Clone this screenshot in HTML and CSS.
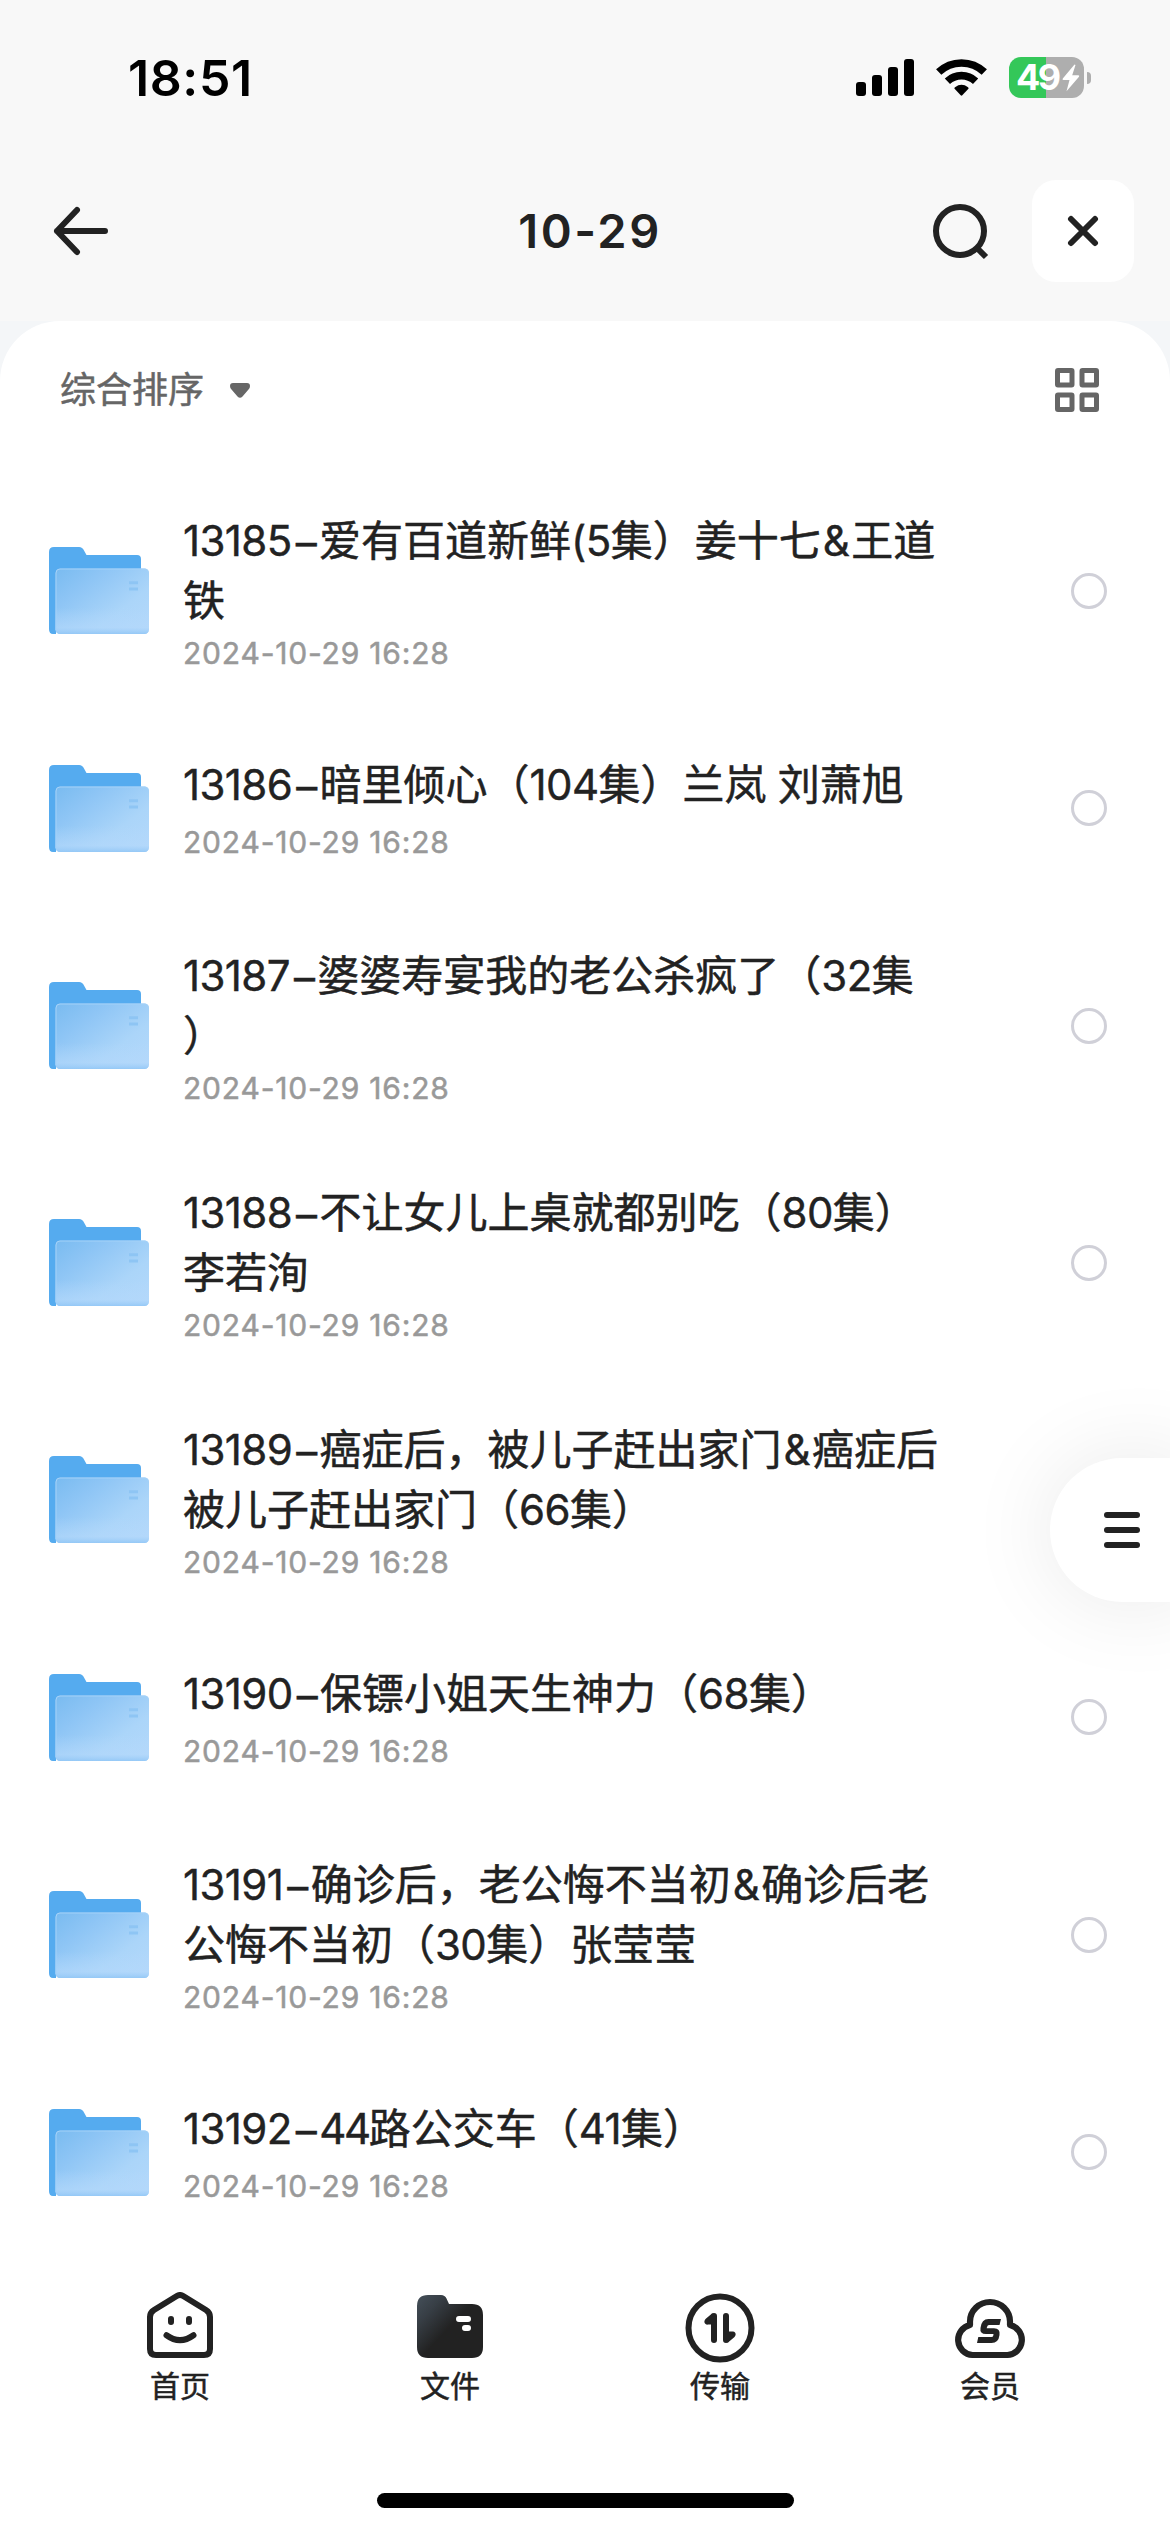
FILE: index.html
```html
<!DOCTYPE html>
<html lang="zh-CN">
<head>
<meta charset="utf-8">
<title>10-29</title>
<link rel="stylesheet" href="styles.css">
</head>
<body>
<svg class="defs" width="0" height="0" aria-hidden="true">
  <defs>
    <linearGradient id="front" x1="0" y1="0" x2="1" y2="0.9">
      <stop offset="0" stop-color="#79bbf0"/>
      <stop offset="0.3" stop-color="#8ec5f5"/>
      <stop offset="0.7" stop-color="#abd5f9"/>
      <stop offset="1" stop-color="#b3d8fb"/>
    </linearGradient>
    <linearGradient id="frontEdge" x1="0" y1="0" x2="0" y2="1">
      <stop offset="0.6" stop-color="#b3d8fb" stop-opacity="0"/>
      <stop offset="0.9" stop-color="#b3d8fb" stop-opacity="0.6"/>
      <stop offset="1" stop-color="#92c7f6" stop-opacity="0.9"/>
    </linearGradient>
    <linearGradient id="dark" x1="0.05" y1="0.1" x2="0.5" y2="0.5">
      <stop offset="0" stop-color="#404a53"/>
      <stop offset="0.35" stop-color="#373e45"/>
      <stop offset="1" stop-color="#222"/>
    </linearGradient>
    <symbol id="folder" viewBox="0 0 100 87">
      <path d="M0 5Q0 0 5 0H30Q33.500 0 35 3.500L37.500 8H88Q92 8 92 12V60H7V87H4Q0 87 0 82Z" fill="#55abef"/>
      <rect x="6.500" y="21.500" width="93.500" height="65.500" rx="4.500" fill="url(#front)"/>
      <rect x="6.500" y="21.500" width="93.500" height="65.500" rx="4.500" fill="url(#frontEdge)"/>
      <path d="M7 83V26Q7 22 11 22H96Q99.500 22 99.500 26" fill="none" stroke="#a4d1f8" stroke-width="1"/>
      <path d="M80 35.700H89M80 42H89" stroke="#8ec5f4" stroke-width="3"/>
    </symbol>
  </defs>
</svg>

<div class="screen">
  <div class="statusbar">
    <span class="clock">18:51</span>
    <div class="indicators">
      <svg width="58" height="37" viewBox="0 0 58 37"><rect x="0" y="23" width="10" height="14" rx="3"/><rect x="16" y="16" width="10" height="21" rx="3"/><rect x="32" y="8" width="10" height="29" rx="3"/><rect x="48" y="0" width="10" height="37" rx="3"/></svg>
      <svg class="wifi" width="51" height="37" viewBox="0 0 51 37"><path d="M2.700 13.100A33 33 0 0 1 48.300 13.100M11.400 22.200A20.500 20.500 0 0 1 39.600 22.200" fill="none" stroke="#000" stroke-width="7.600"/><path d="M18.600 29.800Q18 29 19 28.200Q25.500 23.500 32 28.200Q33 29 32.400 29.800L26.300 36.300Q25.500 37 24.700 36.300Z"/></svg>
      <div class="battery">
        <div class="cell"><span>49</span><svg width="18" height="28" viewBox="0 0 18 28"><path d="M12.500 0.500L0.800 14.500Q0 16 1.500 16H7.500L4.500 27.200L17 12.800Q17.800 11.500 16.300 11.300H10.200L13.500 1Z" fill="#fff"/></svg></div>
        <i class="nub"></i>
      </div>
    </div>
  </div>

  <header class="navbar">
    <svg class="back" width="56" height="50" viewBox="0 0 56 50"><path d="M25 4L5 25L25 46M5 25H53" fill="none" stroke="#222" stroke-width="6" stroke-linecap="round" stroke-linejoin="round"/></svg>
    <h1>10-29</h1>
    <div class="actions">
      <svg width="58" height="58" viewBox="0 0 58 58"><circle cx="29" cy="29" r="24" fill="none" stroke="#222" stroke-width="6"/><path d="M46 46L55 55" stroke="#222" stroke-width="6"/></svg>
      <div class="close"><svg width="32" height="32" viewBox="0 0 32 32"><path d="M4 4L28 28M28 4L4 28" stroke="#222" stroke-width="6" stroke-linecap="round"/></svg></div>
    </div>
  </header>

  <main class="sheet">
    <div class="toolbar">
      <div class="sort"><span>综合排序</span><svg width="20" height="15" viewBox="0 0 20 15"><path d="M3 0H17Q20 0 20 3Q20 5 18.500 6.500L12.500 13.500Q10 16 7.500 13.500L1.500 6.500Q0 5 0 3Q0 0 3 0Z" fill="#666"/></svg></div>
      <svg width="44" height="44" viewBox="0 0 44 44"><g fill="none" stroke="#666" stroke-width="5"><rect x="2.500" y="2.500" width="14.500" height="14.500" rx="0.500"/><rect x="27" y="2.500" width="14.500" height="14.500" rx="0.500"/><rect x="2.500" y="27" width="14.500" height="14.500" rx="0.500"/><rect x="27" y="27" width="14.500" height="14.500" rx="0.500"/></g></svg>
    </div>

    <div class="list">
      <div class="row">
        <svg class="folder"><use href="#folder"/></svg>
        <div class="info"><div class="name"><b>13185</b><b class="dash">–</b>爱有百道新鲜<b>(5</b>集）姜十七<b class="amp">&amp;</b>王道<br>铁</div><div class="date">2024-10-29 16:28</div></div>
        <i class="radio"></i>
      </div>
      <div class="row single">
        <svg class="folder"><use href="#folder"/></svg>
        <div class="info"><div class="name"><b>13186</b><b class="dash">–</b>暗里倾心（<b>104</b>集）兰岚<b> </b>刘萧旭</div><div class="date">2024-10-29 16:28</div></div>
        <i class="radio"></i>
      </div>
      <div class="row">
        <svg class="folder"><use href="#folder"/></svg>
        <div class="info"><div class="name"><b>13187</b><b class="dash">–</b>婆婆寿宴我的老公杀疯了（<b>32</b>集<br>）</div><div class="date">2024-10-29 16:28</div></div>
        <i class="radio"></i>
      </div>
      <div class="row">
        <svg class="folder"><use href="#folder"/></svg>
        <div class="info"><div class="name"><b>13188</b><b class="dash">–</b>不让女儿上桌就都别吃（<b>80</b>集）<br>李若洵</div><div class="date">2024-10-29 16:28</div></div>
        <i class="radio"></i>
      </div>
      <div class="row">
        <svg class="folder"><use href="#folder"/></svg>
        <div class="info"><div class="name"><b>13189</b><b class="dash">–</b>癌症后，被儿子赶出家门<b class="amp">&amp;</b>癌症后<br>被儿子赶出家门（<b>66</b>集）</div><div class="date">2024-10-29 16:28</div></div>
        <i class="radio"></i>
      </div>
      <div class="row single">
        <svg class="folder"><use href="#folder"/></svg>
        <div class="info"><div class="name"><b>13190</b><b class="dash">–</b>保镖小姐天生神力（<b>68</b>集）</div><div class="date">2024-10-29 16:28</div></div>
        <i class="radio"></i>
      </div>
      <div class="row">
        <svg class="folder"><use href="#folder"/></svg>
        <div class="info"><div class="name"><b>13191</b><b class="dash">–</b>确诊后，老公悔不当初<b class="amp">&amp;</b>确诊后老<br>公悔不当初（<b>30</b>集）张莹莹</div><div class="date">2024-10-29 16:28</div></div>
        <i class="radio"></i>
      </div>
      <div class="row single">
        <svg class="folder"><use href="#folder"/></svg>
        <div class="info"><div class="name"><b>13192</b><b class="dash">–</b><b class="tight">44</b>路公交车（<b>41</b>集）</div><div class="date">2024-10-29 16:28</div></div>
        <i class="radio"></i>
      </div>
    </div>
  </main>

  <nav class="tabbar">
    <div class="tabs">
      <div class="tab">
        <svg width="72" height="72" viewBox="0 0 72 72"><g fill="none" stroke="#222" stroke-width="6" stroke-linecap="round"><path d="M32.800 4Q36 2 39.200 4L62 18Q66 20.500 66 25V57Q66 63 60 63H12Q6 63 6 57V25Q6 20.500 10 18Z"/><path d="M27 27V30M45 27V30M22.500 43.200Q36 53 49.500 43.200"/></g></svg>
        <span>首页</span>
      </div>
      <div class="tab">
        <svg width="72" height="72" viewBox="0 0 72 72"><path d="M3 14Q3 3 14 3H27Q31 3 32.500 6.500L35 12H58Q69 12 69 23V55Q69 66 58 66H14Q3 66 3 55Z" fill="url(#dark)"/><path d="M45 27H54M51 36H54" stroke="#fff" stroke-width="6" stroke-linecap="round"/></svg>
        <span>文件</span>
      </div>
      <div class="tab">
        <svg width="72" height="72" viewBox="0 0 72 72"><circle cx="36" cy="36" r="31.500" fill="none" stroke="#222" stroke-width="6"/><path d="M30 24V48M42 24V48" stroke="#222" stroke-width="6" stroke-linecap="round"/><path d="M28 21.500L21.500 27Q19.500 29.500 21 31.500Q22 33 24 32.500H30V22ZM44 50.500L50.500 45Q52.500 42.500 51 40.500Q50 39 48 39.500H42V50Z" fill="#222"/></svg>
        <span>传输</span>
      </div>
      <div class="tab">
        <svg width="72" height="72" viewBox="0 0 72 72"><g fill="none" stroke="#222" stroke-width="6.200"><path d="M16 33V29.500A20 19.500 0 0 1 56 29.500V33A15.200 15.200 0 0 1 53.500 63H18.500A15.200 15.200 0 0 1 16 33Z" stroke-linejoin="round"/></g><path d="M47 27L45.500 33H35Q33.500 33 33 35L32.700 36.300H40Q46.500 36.500 45.500 43Q44.500 51 37.500 51H23L24.300 45H37.500Q39 45 39.300 43.500L39.500 42H32Q25.500 42 26.500 36Q27.500 27 34.500 27Z" fill="#222"/></svg>
        <span>会员</span>
      </div>
    </div>
    <div class="home"></div>
  </nav>

  <div class="fab"><i></i><i></i><i></i></div>
</div>
</body>
</html>
```
FILE: styles.css
```css
* { box-sizing: border-box; }
body {
  margin: 0;
  background: #f4f6f8;
  color: #222;
  font-family: Inter, "Noto Sans CJK SC", sans-serif;
}
svg { display: block; flex: none; }
.defs { position: absolute; }
.screen {
  position: relative;
  width: 1170px;
  height: 2532px;
  overflow: hidden;
  display: flex;
  flex-direction: column;
}

.statusbar {
  height: 141px;
  padding: 57px 79px 0 128px;
  background: #f8f8f8;
  display: flex;
  justify-content: space-between;
  align-items: flex-start;
}
.clock {
  font-size: 50px;
  font-weight: 600;
  line-height: 42px;
  color: #000;
  letter-spacing: 0.6px;
}
.indicators { display: flex; align-items: center; height: 41px; }
.wifi { margin-left: 22px; margin-right: 22px; }
.battery { display: flex; align-items: center; gap: 3px; }
.cell {
  width: 75px;
  height: 41px;
  padding-left: 7px;
  border-radius: 12px;
  background: linear-gradient(90deg, #34c759 37px, #aeaeae 37px);
  display: flex;
  align-items: center;
  gap: 2px;
}
.cell span {
  width: 44px;
  font-size: 36px;
  font-weight: 700;
  line-height: 41px;
  letter-spacing: -2.5px;
  color: #fff;
}
.nub { width: 4px; height: 12px; border-radius: 0 4px 4px 0; background: #aeaeae; }

.navbar {
  height: 180px;
  padding: 0 36px 0 52px;
  background: #f8f8f8;
  display: grid;
  grid-template-columns: 1fr auto 1fr;
  align-items: center;
}
.navbar h1 {
  margin: 0 6px 0 0;
  font-size: 47px;
  font-weight: 600;
  line-height: 60px;
  letter-spacing: 2.5px;
}
.actions { display: flex; justify-content: flex-end; align-items: center; gap: 43px; }
.close {
  width: 102px;
  height: 102px;
  border-radius: 24px;
  background: #fff;
  display: grid;
  place-items: center;
}

.sheet {
  flex: 1;
  border-radius: 60px 60px 0 0;
  background: #fff;
}
.toolbar {
  height: 151px;
  padding: 42px 71px 0 60px;
  display: flex;
  justify-content: space-between;
  align-items: flex-start;
}
.toolbar > svg { margin-top: 5px; }
.sort {
  display: flex;
  align-items: center;
  gap: 26px;
  font-size: 36px;
  line-height: 54px;
  color: #666;
  -webkit-text-stroke: 0.5px;
}

.row {
  height: 237px;
  padding: 0 63px 0 49px;
  display: flex;
  align-items: center;
}
.row.single { height: 198px; }
.folder { width: 100px; height: 87px; }
.info { flex: 1; margin-left: 34px; padding-top: 6px; }
.name {
  font-size: 42px;
  line-height: 60px;
  white-space: nowrap;
  -webkit-text-stroke: 0.5px;
}
.name b { font-weight: 400; letter-spacing: -0.6px; -webkit-text-stroke: 0.4px; }
.name .dash { margin: 0 3px 0 4px; line-height: 0; vertical-align: -2px; }
.name .amp { margin: 0 2px; }
.name .tight { letter-spacing: -2.4px; }
.date {
  font-size: 30px;
  line-height: 45px;
  color: #999;
  letter-spacing: 0.8px;
  -webkit-text-stroke: 0.5px;
}
.single .info { padding-top: 3px; }
.single .date { margin-top: 5px; }
.radio {
  width: 36px;
  height: 36px;
  border: 3.5px solid #d0d0d8;
  border-radius: 50%;
}

.tabbar {
  height: 281px;
  padding: 41px 45px 24px;
  background: #fff;
  display: flex;
  flex-direction: column;
  justify-content: space-between;
  align-items: center;
}
.tabs { width: 100%; display: grid; grid-template-columns: repeat(4, 1fr); }
.tab {
  display: flex;
  flex-direction: column;
  align-items: center;
  font-size: 30px;
  line-height: 44px;
  -webkit-text-stroke: 0.5px;
}
.home { width: 417px; height: 15px; border-radius: 8px; background: #000; }

/* floating menu, tucked against the right edge */
.fab {
  position: absolute;
  top: 1458px;
  right: -24px;
  width: 144px;
  height: 144px;
  padding-left: 54px;
  border-radius: 72px 0 0 72px;
  background: #fff;
  box-shadow: 0 0 90px rgba(0, 0, 0, 0.09);
  display: flex;
  flex-direction: column;
  justify-content: center;
  gap: 9px;
}
.fab i { width: 36px; height: 6px; border-radius: 3px; background: #222; }
```
